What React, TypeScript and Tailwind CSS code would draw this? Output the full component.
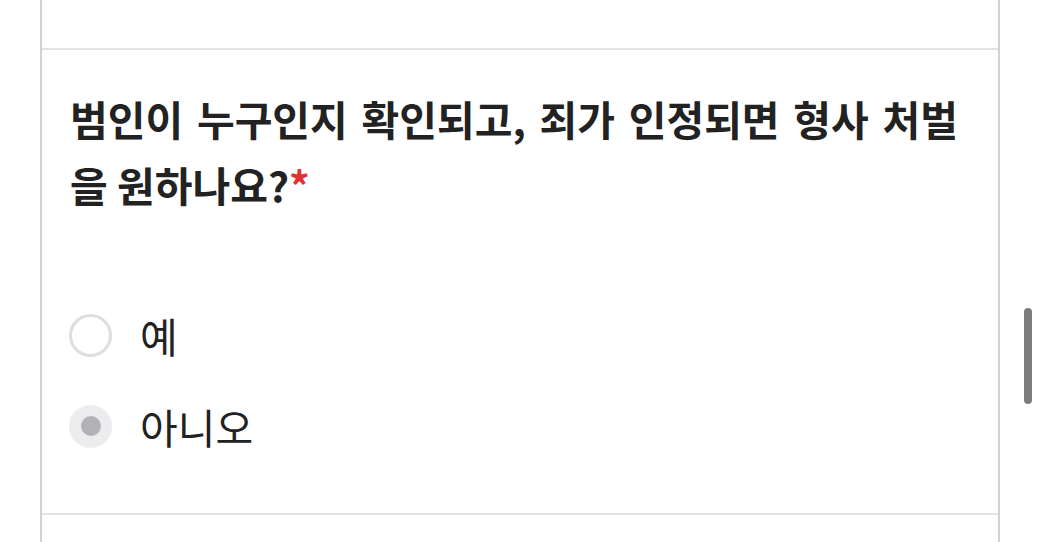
export default function App() {
  return (
    <div className="relative h-[542px] w-[1040px] overflow-hidden bg-white font-['Noto_Sans_CJK_KR',sans-serif] text-[#222]">
      <div className="ml-[40px] flex h-full w-[960px] flex-col border-x-2 border-[#d2d2d2]">
        <div className="h-[50px] shrink-0 border-b-2 border-[#e2e2e2]" />
        <div className="flex h-[465px] shrink-0 flex-col border-b-2 border-[#e2e2e2] pl-[28px] pr-[40px] pt-[35px]">
          <h2 className="text-justify text-[41px] font-bold leading-[66px]">
            범인이 누구인지 확인되고, 죄가 인정되면 형사 처벌을 원하나요?
            <span className="text-[#e03434]">*</span>
          </h2>
          <div className="mt-[95px] flex flex-col gap-[45px]">
            <label className="flex items-center gap-[28px]">
              <span className="-ml-[1px] size-[43px] rounded-full border-[3px] border-[#dedede] bg-white" />
              <span className="text-[41px] leading-[46px]">예</span>
            </label>
            <label className="flex items-center gap-[28px]">
              <span className="-ml-[1px] flex size-[43px] items-center justify-center rounded-full bg-[#ececee]">
                <span className="size-[20px] rounded-full bg-[#b2b2b6]" />
              </span>
              <span className="text-[41px] leading-[46px]">아니오</span>
            </label>
          </div>
        </div>
        <div className="flex-1" />
      </div>
      <div className="absolute left-[1024px] top-[308px] h-[96px] w-[8px] rounded-full bg-[#7c7c7c]" />
    </div>
  );
}
